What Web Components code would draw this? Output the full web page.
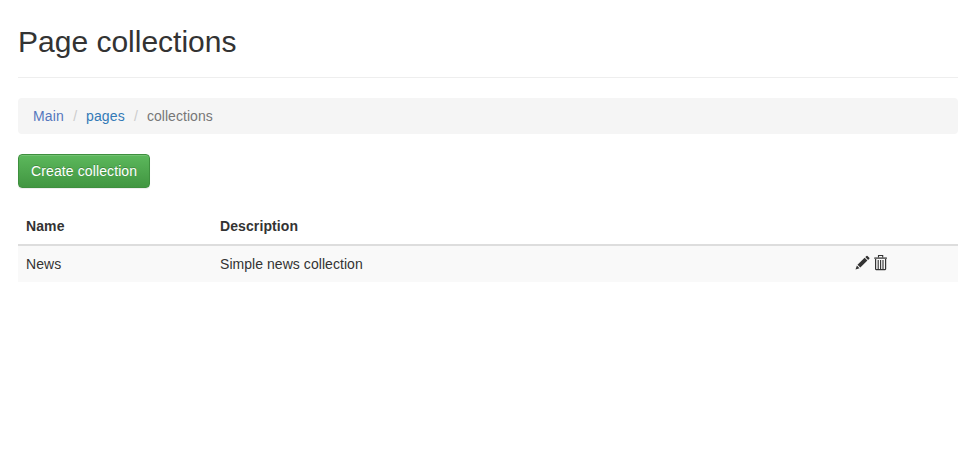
<!DOCTYPE html>
<html lang="en"><head><meta charset="utf-8"><title>Page collections</title>
<style>
body{margin:0;background:#fff;color:#333;font:14px/20px "Liberation Sans",Arial,sans-serif}
</style></head><body>
<collections-page></collections-page>
<script>
const define=(name,html)=>{
  const t=document.createElement('template');t.innerHTML=html;
  customElements.define(name,class extends HTMLElement{
    constructor(){super();this.attachShadow({mode:'open'}).append(t.content.cloneNode(true));}
  });
};
define('page-header',`<style>
:host{display:block;border-bottom:1px solid #eee;padding-bottom:19px;margin-bottom:20px}
h1{margin:0;font-size:30px;font-weight:400;line-height:33px}
</style><h1><slot></slot></h1>`);
define('crumb-link',`<style>
:host{display:block}:host(:not(:first-child))::before{content:"/";color:#ccc;padding:0 9px 0 5px}
a{color:var(--crumb-color,#337ab7);text-decoration:none;letter-spacing:.12px}
:host([active]) a{color:#777;letter-spacing:.04px}
</style><a><slot></slot></a>`);
define('bread-crumbs',`<style>
:host{display:flex;gap:4.3px;background:#f5f5f5;border-radius:4px;padding:8px 15px;margin-bottom:20px}
</style><slot></slot>`);
define('action-button',`<style>
:host{display:block}
button{display:block;box-sizing:border-box;width:132px;height:34px;padding:6px 12px;margin:0;font:inherit;letter-spacing:.11px;white-space:nowrap;color:#fff;border:1px solid #3e8f3e;border-radius:4px;background:linear-gradient(#5cb85c,#419641);text-shadow:0 -1px 0 rgba(0,0,0,.2);box-shadow:inset 0 1px 0 rgba(255,255,255,.15),0 1px 1px rgba(0,0,0,.075)}
</style><button><slot></slot></button>`);
define('pencil-icon',`<style>:host{display:block;width:15px;height:15px}svg{display:block}</style>
<svg width="15" height="15" viewBox="0 0 15 15" fill="currentColor"><path d="M11.5.9q.5-.5 1 0l1.8 1.8q.5.5 0 1l-1.2 1.2-2.8-2.8zM9.6 2.8l2.8 2.8-7.1 7-2.8-2.8zM1.9 10.6l2.6 2.6L.5 14.6z"/></svg>`);
define('trash-icon',`<style>:host{display:block;width:14px;height:16px}svg{display:block}</style>
<svg width="14" height="16" viewBox="0 0 14 16" fill="none" stroke="currentColor"><path d="M4.5 2.5v-2h4.2v2" stroke-width="1.1"/><path d="M.2 4V2.7q0-.5.5-.5h11.8q.5 0 .5.5V4z" fill="currentColor" fill-opacity=".72" stroke="none"/><path d="M1.6 4v10.1q0 .5.5.5h9q.5 0 .5-.5V4" stroke-width="1.2"/><path d="M4.2 5v9M6.6 5v9M9 5v9" stroke-width="1.1"/></svg>`);
define('table-row',`<style>
:host{display:grid;grid-template-columns:194px 635px 1fr;line-height:20px;background:#f9f9f9}
:host([head]){font-weight:700;background:none;border-bottom:2px solid #ddd}
div{padding:8px;letter-spacing:.05px}
:host([head]) div{letter-spacing:.1px}
div.actions{display:flex;gap:4px;padding:9px 8px 0}
</style><div><slot name="name"></slot></div><div><slot name="description"></slot></div><div class="actions"><slot></slot></div>`);
define('collections-page',`<style>
:host{display:block;padding:25px 19px 0 18px}
.table{margin-top:20px}
.home{--crumb-color:#5577bd}
</style>
<page-header>Page collections</page-header>
<bread-crumbs><crumb-link class="home">Main</crumb-link><crumb-link>pages</crumb-link><crumb-link active>collections</crumb-link></bread-crumbs>
<action-button>Create collection</action-button>
<div class="table">
<table-row head><span slot="name">Name</span><span slot="description">Description</span></table-row>
<table-row><span slot="name">News</span><span slot="description">Simple news collection</span><pencil-icon></pencil-icon><trash-icon></trash-icon></table-row>
</div>`);
</script></body></html>
